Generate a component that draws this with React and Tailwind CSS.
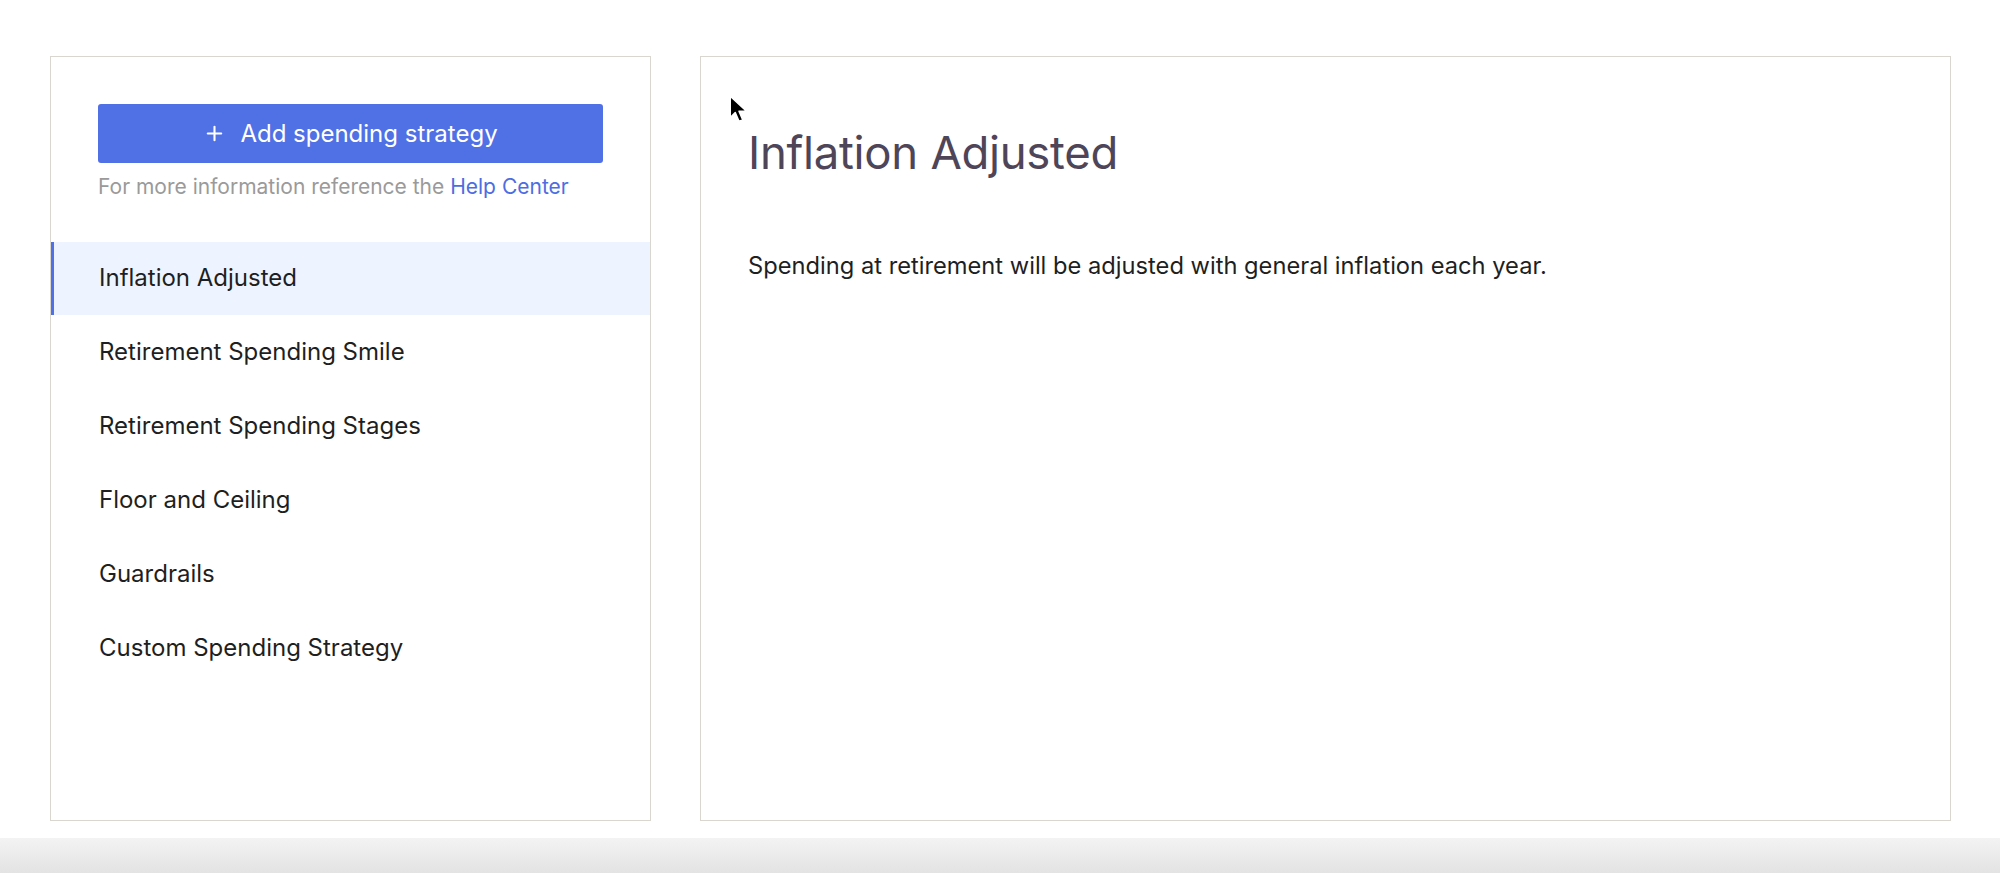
import React from 'react';
import { Plus } from 'lucide-react';

const strategies = [
  'Inflation Adjusted',
  'Retirement Spending Smile',
  'Retirement Spending Stages',
  'Floor and Ceiling',
  'Guardrails',
  'Custom Spending Strategy',
];

function Cursor() {
  return (
    <svg className="absolute left-[729px] top-[95px]" width="20" height="30" viewBox="0 0 16 24">
      <path d="M1 1 L1 18 L5 14 L8 21 L11 20 L8 13 L14 13 Z" fill="#000" stroke="#fff" strokeWidth="1.2" strokeLinejoin="round" />
    </svg>
  );
}

export default function App() {
  const [active, setActive] = React.useState(0);

  return (
    <div className="relative w-[2000px] h-[873px] bg-white overflow-hidden font-['Inter','Open_Sans',sans-serif]">
      <div className="flex gap-[49px] pl-[50px] pt-[56px] h-[821px]">
        {/* sidebar */}
        <div className="w-[601px] border-[1.5px] border-[#d9d5cf] bg-white flex flex-col">
          <div className="px-[47px] pt-[47px]">
            <button className="w-full h-[59px] rounded-[3px] bg-[#5070e6] text-white text-[24px] flex items-center justify-center gap-[14px]">
              <Plus className="w-[23px] h-[23px]" strokeWidth={2.2} />
              <span>Add spending strategy</span>
            </button>
            <p className="mt-[8px] text-[21px] text-[#9a9a9a]">
              For more information reference the <span className="text-[#4d6de2]">Help Center</span>
            </p>
          </div>
          <ul className="mt-[39px]">
            {strategies.map((s, i) => (
              <li
                key={s}
                onClick={() => setActive(i)}
                className={
                  i === active
                    ? 'h-[73px] flex items-center pl-[45px] border-l-[3px] border-[#5070e6] bg-[#eef4ff] text-[24px] text-[#1f1f1f] cursor-pointer'
                    : 'h-[74px] flex items-center pl-[48px] text-[24px] text-[#1f1f1f] cursor-pointer'
                }
              >
                {s}
              </li>
            ))}
          </ul>
        </div>

        {/* detail */}
        <div className="w-[1251px] border-[1.5px] border-[#d9d5cf] bg-white px-[47px] pt-[68px]">
          <h1 className="text-[45.5px] leading-[56px] text-[#4e4559] tracking-[-0.3px]">{strategies[active]}</h1>
          <p className="mt-[67px] text-[23.7px] text-[#1f1f1f]">
            Spending at retirement will be adjusted with general inflation each year.
          </p>
        </div>
      </div>

      <div className="absolute left-0 right-0 bottom-0 h-[35px] bg-gradient-to-b from-[#f3f3f3] to-[#e3e3e3]" />
      <Cursor />
    </div>
  );
}
